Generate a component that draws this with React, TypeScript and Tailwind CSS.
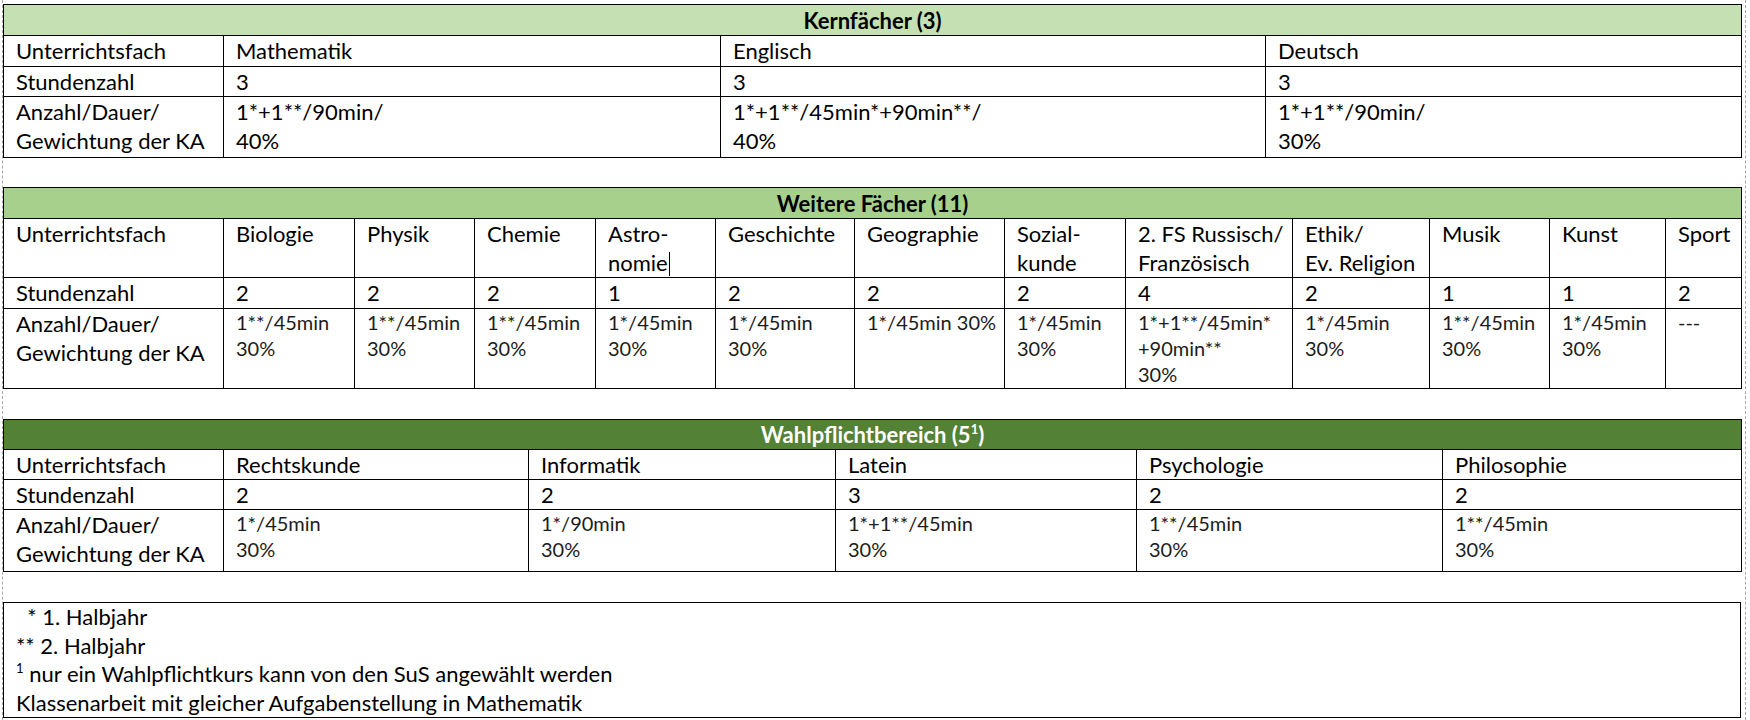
import React from 'react'

type Cell = { lines: string[]; small?: boolean; caret?: boolean }

const font = { fontFamily: 'Lato, "Liberation Sans", sans-serif' }

const kern = {
  title: 'Kernfächer (3)',
  widths: [220, 497, 545, 476],
  heights: [31, 31, 29, 61],
  faecher: [['Mathematik'], ['Englisch'], ['Deutsch']],
  stunden: ['3', '3', '3'],
  ka: [
    ['1*+1**/90min/', '40%'],
    ['1*+1**/45min*+90min**/', '40%'],
    ['1*+1**/90min/', '30%'],
  ],
  kaSmall: false,
}

const weitere = {
  title: 'Weitere Fächer (11)',
  widths: [220, 131, 120, 121, 120, 139, 150, 121, 167, 137, 120, 116, 76],
  heights: [31, 59, 31, 80],
  faecher: [
    ['Biologie'],
    ['Physik'],
    ['Chemie'],
    ['Astro-', 'nomie'],
    ['Geschichte'],
    ['Geographie'],
    ['Sozial-', 'kunde'],
    ['2. FS Russisch/', 'Französisch'],
    ['Ethik/', 'Ev. Religion'],
    ['Musik'],
    ['Kunst'],
    ['Sport'],
  ],
  stunden: ['2', '2', '2', '1', '2', '2', '2', '4', '2', '1', '1', '2'],
  ka: [
    ['1**/45min', '30%'],
    ['1**/45min', '30%'],
    ['1**/45min', '30%'],
    ['1*/45min', '30%'],
    ['1*/45min', '30%'],
    ['1*/45min 30%'],
    ['1*/45min', '30%'],
    ['1*+1**/45min*', '+90min**', '30%'],
    ['1*/45min', '30%'],
    ['1**/45min', '30%'],
    ['1*/45min', '30%'],
    ['---'],
  ],
  kaSmall: true,
}

const wahl = {
  widths: [220, 305, 307, 301, 306, 299],
  heights: [30, 30, 29, 62],
  faecher: [['Rechtskunde'], ['Informatik'], ['Latein'], ['Psychologie'], ['Philosophie']],
  stunden: ['2', '2', '3', '2', '2'],
  ka: [
    ['1*/45min', '30%'],
    ['1*/90min', '30%'],
    ['1*+1**/45min', '30%'],
    ['1**/45min', '30%'],
    ['1**/45min', '30%'],
  ],
  kaSmall: true,
}

function Td({ cell }: { cell: Cell }) {
  return (
    <td
      className={`border border-black px-[12px] py-0 align-top ${
        cell.small ? 'text-[20px] leading-[26px] text-[#1c1c1c]' : 'text-[22px] leading-[29px] text-black'
      }`}
    >
      {cell.lines.map((l, i) => (
        <div key={i} className="whitespace-nowrap">
          {l}
          {cell.caret && i === cell.lines.length - 1 && (
            <span className="inline-block w-px h-[24px] bg-black align-[-5px] ml-[1px]" />
          )}
        </div>
      ))}
    </td>
  )
}

function FachTabelle({
  data,
  header,
  headerClass,
}: {
  data: typeof kern
  header: React.ReactNode
  headerClass: string
}) {
  const [h0, h1, h2, h3] = data.heights
  return (
    <table className="table-fixed border-collapse w-[1738px]">
      <colgroup>
        {data.widths.map((w, i) => (
          <col key={i} style={{ width: w }} />
        ))}
      </colgroup>
      <tbody>
        <tr style={{ height: h0 }}>
          <td
            colSpan={data.widths.length}
            className={`border border-black text-center text-[22px] font-bold leading-[29px] ${headerClass}`}
          >
            {header}
          </td>
        </tr>
        <tr style={{ height: h1 }}>
          <Td cell={{ lines: ['Unterrichtsfach'] }} />
          {data.faecher.map((f, i) => (
            <Td key={i} cell={{ lines: f, caret: f[0] === 'Astro-' }} />
          ))}
        </tr>
        <tr style={{ height: h2 }}>
          <Td cell={{ lines: ['Stundenzahl'] }} />
          {data.stunden.map((s, i) => (
            <Td key={i} cell={{ lines: [s] }} />
          ))}
        </tr>
        <tr style={{ height: h3 }}>
          <Td cell={{ lines: ['Anzahl/Dauer/', 'Gewichtung der KA'] }} />
          {data.ka.map((k, i) => (
            <Td key={i} cell={{ lines: k, small: data.kaSmall }} />
          ))}
        </tr>
      </tbody>
    </table>
  )
}

function Hoch() {
  return <sup className="text-[13px] -top-[9px]">1</sup>
}

export default function App() {
  return (
    <div className="w-[1750px] h-[720px] bg-white overflow-hidden" style={font}>
      <div className="ml-[2px] w-[1744px] h-full border-x border-dashed border-[#a8a8a8] pt-[4px]">
        <FachTabelle data={kern} header={kern.title} headerClass="bg-[#c5e0b3] text-black" />
        <div className="h-[29px]" />
        <FachTabelle data={weitere} header={weitere.title} headerClass="bg-[#a8d08d] text-black" />
        <div className="h-[30px]" />
        <FachTabelle
          data={{ ...wahl, title: '' }}
          header={
            <>
              Wahlpflichtbereich (5
              <Hoch />)
            </>
          }
          headerClass="bg-[#538135] text-white"
        />
        <div className="h-[30px]" />
        <div className="w-[1738px] border border-black px-[12px] text-[22px] leading-[28.5px] text-black">
          <div className="whitespace-pre">{'  * 1. Halbjahr'}</div>
          <div>** 2. Halbjahr</div>
          <div>
            <Hoch /> nur ein Wahlpflichtkurs kann von den SuS angewählt werden
          </div>
          <div>Klassenarbeit mit gleicher Aufgabenstellung in Mathematik</div>
        </div>
      </div>
    </div>
  )
}
